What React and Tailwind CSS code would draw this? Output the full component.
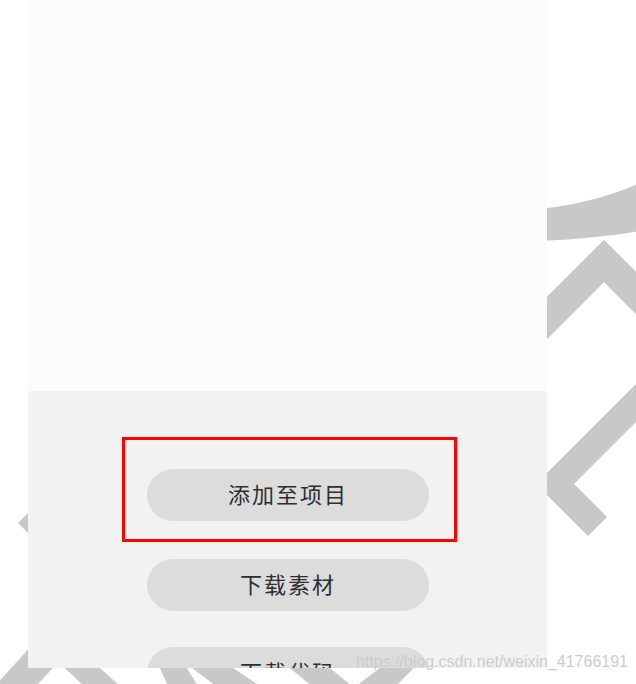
import React from "react"

const actions = [
  { label: "添加至项目", marked: true },
  { label: "下载素材" },
  { label: "下载代码" },
]

function Backdrop() {
  // grey watermark strokes sitting behind the panel
  return (
    <svg
      className="absolute inset-0"
      width="636"
      height="684"
      viewBox="0 0 636 684"
      fill="#c8c8c8"
    >
      <path d="M540 209 Q595 203 640 183 L640 231 Q600 238 540 241 Z" />
      <polyline
        points="470,395 604,261 710,367"
        fill="none"
        stroke="#c8c8c8"
        strokeWidth="30"
        strokeLinejoin="miter"
      />
      <polyline
        points="760,279 555,484 597.5,526.5"
        fill="none"
        stroke="#c8c8c8"
        strokeWidth="27"
        strokeLinejoin="miter"
      />
      <polygon points="18,523 40,501 40,545" />
      <polygon points="-5,686 40,636 83,636 36,686" />
      <polygon points="39,644 73,644 120,686 84,686" />
      <polygon points="149,644 172,644 198,686 168,686" />
      <polygon points="160,644 197,644 260,686 216,686" />
      <polygon points="260,644 300,644 352,686 312,686" />
      <polygon points="412,644 437,644 396,686 356,686" />
    </svg>
  )
}

function Pill({ label }) {
  return (
    <button
      type="button"
      className="w-[282px] h-[52px] shrink-0 rounded-full bg-[#dcdcdc] flex items-center justify-center text-[22px] tracking-[2px] text-[#2e2e2e] font-['Liberation_Sans','Noto_Sans_CJK_SC',sans-serif]"
    >
      {label}
    </button>
  )
}

export default function App() {
  return (
    <div className="relative w-[636px] h-[684px] bg-white overflow-hidden">
      <Backdrop />
      <div className="relative ml-[28px] w-[519px] h-[668px] overflow-hidden flex flex-col">
        <div className="h-[391px] shrink-0 bg-[#fbfbfb]" />
        <div className="flex-1 min-h-0 bg-[#f2f2f2] pt-[46px]">
          {actions.map((action, i) =>
            action.marked ? (
              <div
                key={action.label}
                className="ml-[94px] w-[335px] h-[105px] border-[3px] border-[#ff0000] pt-[29px] pl-[22px]"
              >
                <Pill label={action.label} />
              </div>
            ) : (
              <div
                key={action.label}
                className={`ml-[119px] ${i === 1 ? "mt-[17px]" : "mt-[36px]"}`}
              >
                <Pill label={action.label} />
              </div>
            )
          )}
        </div>
      </div>
      <span className="absolute top-[654px] right-[8px] leading-none text-[16px] text-[#cdcdcd] font-['Liberation_Sans',sans-serif]">
        https://blog.csdn.net/weixin_41766191
      </span>
    </div>
  )
}
